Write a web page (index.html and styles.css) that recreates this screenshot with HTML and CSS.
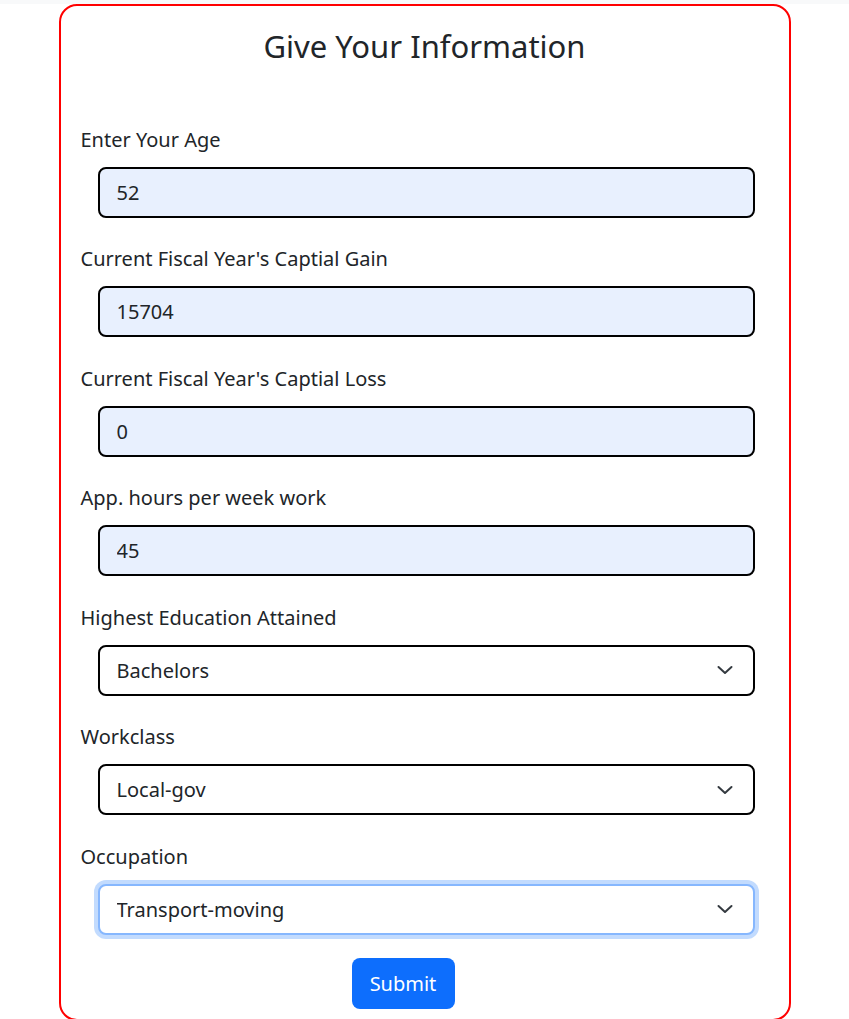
FILE: index.html
```html
<!DOCTYPE html>
<html lang="en">
<head>
<meta charset="utf-8">
<title>Give Your Information</title>
<link rel="stylesheet" href="styles.css">
</head>
<body>
<div class="topbar"></div>
<div class="card">
  <h1 class="title">Give Your Information</h1>
  <form class="form">
    <div class="group">
      <label class="label" for="age">Enter Your Age</label>
      <input class="field filled" id="age" type="text" value="52">
    </div>
    <div class="group">
      <label class="label" for="gain">Current Fiscal Year's Captial Gain</label>
      <input class="field filled" id="gain" type="text" value="15704">
    </div>
    <div class="group">
      <label class="label" for="loss">Current Fiscal Year's Captial Loss</label>
      <input class="field filled" id="loss" type="text" value="0">
    </div>
    <div class="group">
      <label class="label" for="hours">App. hours per week work</label>
      <input class="field filled" id="hours" type="text" value="45">
    </div>
    <div class="group">
      <label class="label" for="edu">Highest Education Attained</label>
      <div class="select-wrap">
        <select class="field select" id="edu"><option>Bachelors</option></select>
        <svg class="chevron" width="16" height="10" viewBox="0 0 16 10"><polyline points="1.5,2 8,8 14.5,2" fill="none" stroke="#343a40" stroke-width="2" stroke-linecap="round" stroke-linejoin="round"/></svg>
      </div>
    </div>
    <div class="group">
      <label class="label" for="wc">Workclass</label>
      <div class="select-wrap">
        <select class="field select" id="wc"><option>Local-gov</option></select>
        <svg class="chevron" width="16" height="10" viewBox="0 0 16 10"><polyline points="1.5,2 8,8 14.5,2" fill="none" stroke="#343a40" stroke-width="2" stroke-linecap="round" stroke-linejoin="round"/></svg>
      </div>
    </div>
    <div class="group last">
      <label class="label" for="occ">Occupation</label>
      <div class="select-wrap">
        <select class="field select focused" id="occ"><option>Transport-moving</option></select>
        <svg class="chevron" width="16" height="10" viewBox="0 0 16 10"><polyline points="1.5,2 8,8 14.5,2" fill="none" stroke="#343a40" stroke-width="2" stroke-linecap="round" stroke-linejoin="round"/></svg>
      </div>
    </div>
    <div class="actions">
      <button type="button" class="btn">Submit</button>
    </div>
  </form>
</div>
</body>
</html>
```
FILE: styles.css
```css
* { box-sizing: border-box; }
html, body { margin: 0; padding: 0; }
body {
  font-family: "Segoe UI", "Noto Sans", "Open Sans", sans-serif;
  color: #212529;
  background: #fff;
  height: 1019px;
  overflow: hidden;
}
.topbar {
  height: 4px;
  background: #f8f9fa;
}
.card {
  width: 732px;
  margin: 0 auto;
  border: 2px solid #ff0000;
  border-radius: 18px;
  padding: 20px 20px 10px;
}
.title {
  margin: 0;
  text-align: center;
  font-weight: 400;
  font-size: 31px;
  line-height: 41.6px;
}
.form {
  margin-top: 57px;
}
.group {
  margin-bottom: 26.5px;
}
.label {
  display: block;
  font-size: 20px;
  line-height: 30px;
  margin-bottom: 12px;
}
.field {
  display: block;
  width: 657px;
  height: 51px;
  margin-left: 17px;
  padding: 0 17px;
  border: 2px solid #000;
  border-radius: 8px;
  font-family: inherit;
  font-size: 20px;
  color: #212529;
  background: #fff;
  outline: none;
}
.filled { background: #e8f0fe; }
.select-wrap { position: relative; }
.select {
  -webkit-appearance: none;
  appearance: none;
}
.focused {
  border-color: #86b7fe;
  box-shadow: 0 0 0 4px rgba(13, 110, 253, 0.25);
}
.chevron {
  position: absolute;
  right: 36px;
  top: 50%;
  margin-top: -5px;
  pointer-events: none;
}
.group.last { margin-bottom: 23px; }
.actions {
  padding-left: 271px;
}
.btn {
  height: 51px;
  width: 103px;
  padding: 0;
  border: none;
  border-radius: 8px;
  background: #0d6efd;
  color: #fff;
  font-family: inherit;
  font-size: 20px;
}
```
